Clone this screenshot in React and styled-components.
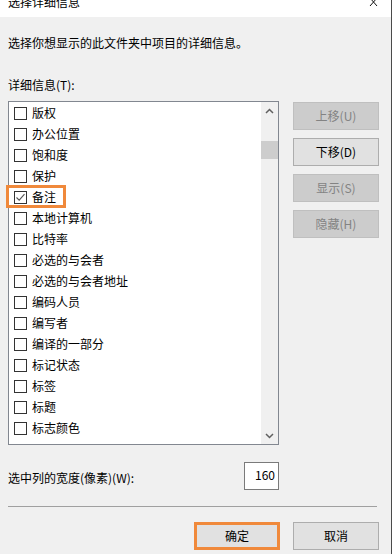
import React from 'react'
import styled, { createGlobalStyle } from 'styled-components'

const GlobalStyle = createGlobalStyle`
  html, body {
    margin: 0;
    padding: 0;
    background: #f0f0f0;
  }
  body {
    font-family: "Noto Sans CJK SC", "Noto Sans", sans-serif;
    font-size: 12px;
    color: #000;
  }
`

const items = [
  { name: '版权' },
  { name: '办公位置' },
  { name: '饱和度' },
  { name: '保护' },
  { name: '备注', checked: true, marked: true },
  { name: '本地计算机' },
  { name: '比特率' },
  { name: '必选的与会者' },
  { name: '必选的与会者地址' },
  { name: '编码人员' },
  { name: '编写者' },
  { name: '编译的一部分' },
  { name: '标记状态' },
  { name: '标签' },
  { name: '标题' },
  { name: '标志颜色' },
]

const moveButtons = [
  { label: '上移(U)', disabled: true },
  { label: '下移(D)' },
  { label: '显示(S)', disabled: true },
  { label: '隐藏(H)', disabled: true },
]

const App = () => {
  return (
    <>
      <GlobalStyle />
      <Window>
        <TitleBar>
          <Title>选择详细信息</Title>
          <CloseIcon width="10" height="8" viewBox="0 0 10 8">
            <path d="M1 -2 L8 6 M8 -2 L1 6" stroke="#111" strokeWidth="1" fill="none" />
          </CloseIcon>
        </TitleBar>
        <Body>
          <Intro>选择你想显示的此文件夹中项目的详细信息。</Intro>
          <Label>详细信息(T):</Label>
          <MainRow>
            <ListBox>
              <Rows>
                {items.map((item) => (
                  <Row key={item.name}>
                    <Check>
                      {item.checked && (
                        <svg width="11" height="11" viewBox="0 0 11 11">
                          <path d="M1.5 5.5 L4.2 8.2 L9.5 2.2" stroke="#555" strokeWidth="1.1" fill="none" />
                        </svg>
                      )}
                    </Check>
                    <RowText>{item.name}</RowText>
                    {item.marked && <Highlight />}
                  </Row>
                ))}
              </Rows>
              <ScrollBar>
                <Arrow width="9" height="6" viewBox="0 0 9 6">
                  <path d="M1 5 L4.5 1.5 L8 5" stroke="#606060" strokeWidth="1.5" fill="none" />
                </Arrow>
                <Thumb />
                <Arrow width="9" height="6" viewBox="0 0 9 6">
                  <path d="M1 1 L4.5 4.5 L8 1" stroke="#606060" strokeWidth="1.5" fill="none" />
                </Arrow>
              </ScrollBar>
            </ListBox>
            <ButtonColumn>
              {moveButtons.map((b) => (
                <Button key={b.label} disabled={b.disabled}>{b.label}</Button>
              ))}
            </ButtonColumn>
          </MainRow>
          <WidthRow>
            <WidthLabel>选中列的宽度(像素)(W):</WidthLabel>
            <WidthInput>160</WidthInput>
          </WidthRow>
          <Separator />
          <Footer>
            <Button $primary>确定</Button>
            <Button>取消</Button>
          </Footer>
        </Body>
      </Window>
    </>
  )
}

const Window = styled.div`
  width: 392px;
  height: 554px;
  box-sizing: border-box;
  border-right: 1px solid #4a4a4a;
  display: flex;
  flex-direction: column;
  overflow: hidden;
  background: #f0f0f0;
`

const TitleBar = styled.div`
  height: 17px;
  background: #fff;
  display: flex;
  justify-content: space-between;
  align-items: flex-start;
  padding: 0 12px 0 8px;
  overflow: hidden;
  flex-shrink: 0;
`

const Title = styled.div`
  font-size: 12px;
  line-height: 16px;
  margin-top: -6px;
`

const CloseIcon = styled.svg`
  display: block;
`

const Body = styled.div`
  flex: 1;
  padding: 18px 12px 0 8px;
  display: flex;
  flex-direction: column;
`

const Intro = styled.div`
  line-height: 16px;
`

const Label = styled.div`
  line-height: 16px;
  margin-top: 26px;
`

const MainRow = styled.div`
  display: flex;
  gap: 14px;
  margin-top: 8px;
`

const ListBox = styled.div`
  width: 271px;
  height: 344px;
  box-sizing: border-box;
  border: 1px solid #828790;
  background: #fff;
  display: flex;
`

const Rows = styled.div`
  flex: 1;
  padding-top: 1px;
  display: flex;
  flex-direction: column;
`

const Row = styled.div`
  position: relative;
  height: 21px;
  display: flex;
  align-items: center;
  gap: 5px;
  padding-left: 5px;
  line-height: 16px;
`

const RowText = styled.span`
  margin-bottom: 2px;
`

const Check = styled.span`
  width: 13px;
  height: 13px;
  box-sizing: border-box;
  border: 1px solid #333;
  background: #fff;
  display: flex;
  align-items: center;
  justify-content: center;
  flex-shrink: 0;
`

const Highlight = styled.span`
  position: absolute;
  left: -3px;
  top: -2px;
  width: 60px;
  height: 23px;
  box-sizing: border-box;
  border: 3px solid #f0893b;
  pointer-events: none;
`

const ScrollBar = styled.div`
  width: 17px;
  background: #f0f0f0;
  display: flex;
  flex-direction: column;
  align-items: center;
  padding: 6px 0 5px;
`

const Arrow = styled.svg`
  display: block;
  flex-shrink: 0;
  &:last-child {
    margin-top: auto;
  }
`

const Thumb = styled.div`
  width: 17px;
  height: 18px;
  background: #cdcdcd;
  margin-top: 27px;
`

const ButtonColumn = styled.div`
  display: flex;
  flex-direction: column;
  gap: 8px;
  margin-top: 1px;
`

const Button = styled.div`
  width: 86px;
  height: 28px;
  box-sizing: border-box;
  display: flex;
  align-items: center;
  justify-content: center;
  line-height: 16px;
  background: ${(p) => (p.disabled ? '#cccccc' : '#e1e1e1')};
  color: ${(p) => (p.disabled ? '#838383' : '#000')};
  border: ${(p) =>
    p.$primary ? '3px solid #f0893b' : p.disabled ? '1px solid #bfbfbf' : '1px solid #adadad'};
`

const WidthRow = styled.div`
  display: flex;
  align-items: center;
  justify-content: space-between;
  margin-top: 17px;
  width: 271px;
`

const WidthLabel = styled.div`
  line-height: 16px;
  margin-top: 4px;
`

const WidthInput = styled.div`
  width: 35px;
  height: 28px;
  box-sizing: border-box;
  border: 1px solid #7a7a7a;
  background: #fff;
  text-align: right;
  padding: 4px 3px 0 0;
  line-height: 16px;
`

const Separator = styled.div`
  height: 1px;
  background: #a0a0a0;
  margin-top: 16px;
  width: 369px;
`

const Footer = styled.div`
  display: flex;
  justify-content: flex-end;
  gap: 13px;
  margin-top: 15px;
`

export default App
